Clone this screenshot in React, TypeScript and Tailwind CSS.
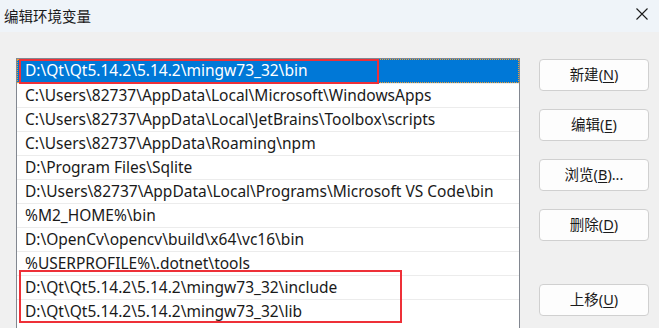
import React from "react";

const rows = [
  "D:\\Qt\\Qt5.14.2\\5.14.2\\mingw73_32\\bin",
  "C:\\Users\\82737\\AppData\\Local\\Microsoft\\WindowsApps",
  "C:\\Users\\82737\\AppData\\Local\\JetBrains\\Toolbox\\scripts",
  "C:\\Users\\82737\\AppData\\Roaming\\npm",
  "D:\\Program Files\\Sqlite",
  "D:\\Users\\82737\\AppData\\Local\\Programs\\Microsoft VS Code\\bin",
  "%M2_HOME%\\bin",
  "D:\\OpenCv\\opencv\\build\\x64\\vc16\\bin",
  "%USERPROFILE%\\.dotnet\\tools",
  "D:\\Qt\\Qt5.14.2\\5.14.2\\mingw73_32\\include",
  "D:\\Qt\\Qt5.14.2\\5.14.2\\mingw73_32\\lib",
];

function Btn({ label, k, suffix, className = "" }: { label: string; k: string; suffix?: string; className?: string }) {
  return (
    <div
      className={
        "flex h-[32px] w-[110px] items-center justify-center rounded-[4px] border border-[#d0d0d0] bg-[#fdfdfd] text-[14.5px] text-[#1a1a1a] " +
        className
      }
    >
      <span>
        {label}(<span className="underline underline-offset-2">{k}</span>){suffix}
      </span>
    </div>
  );
}

export default function App() {
  return (
    <div
      className="relative h-[328px] w-[659px] overflow-hidden bg-[#f0f0f0]"
      style={{ fontFamily: '"Noto Sans", "Noto Sans CJK SC", sans-serif' }}
    >
      <div className="flex h-[32px] items-center justify-between bg-[#eff4f9] pl-[4px] pr-[6px]">
        <span className="text-[14.5px] text-[#1a1a1a]" style={{ fontFamily: '"Noto Sans CJK SC", sans-serif' }}>
          编辑环境变量
        </span>
        <svg width="14" height="14" viewBox="0 0 14 14" className="mt-[-4px] mr-[4px]">
          <path d="M1.5 1.5 L12.5 12.5 M12.5 1.5 L1.5 12.5" stroke="#1a1a1a" strokeWidth="1.1" fill="none" />
        </svg>
      </div>
      <div className="flex pt-[26px]">
        <div className="ml-[16px] w-[504px] h-[300px] border border-b-0 border-[#828790] bg-white">
          {rows.map((r, i) => (
            <div
              key={i}
              className={
                "flex h-[24px] items-center pl-[8px] text-[15.5px] whitespace-nowrap " +
                (i === 0
                  ? "bg-[#0078d7] text-white outline outline-1 outline-dotted outline-[#f0a030] -outline-offset-1"
                  : "border-t border-[#ececec] text-[#1a1a1a]")
              }
            >
              {r}
            </div>
          ))}
        </div>
        <div className="ml-[19px] flex flex-col gap-[18px] pt-[1px]">
          <Btn label="新建" k="N" />
          <Btn label="编辑" k="E" />
          <Btn label="浏览" k="B" suffix="..." />
          <Btn label="删除" k="D" />
          <Btn label="上移" k="U" className="mt-[25px]" />
        </div>
      </div>
      <div className="pointer-events-none absolute left-[19px] top-[59px] h-[25px] w-[360px] border-2 border-[#ee3038]" />
      <div className="pointer-events-none absolute left-[19px] top-[270px] h-[53px] w-[383px] border-2 border-[#ee3038]" />
    </div>
  );
}
